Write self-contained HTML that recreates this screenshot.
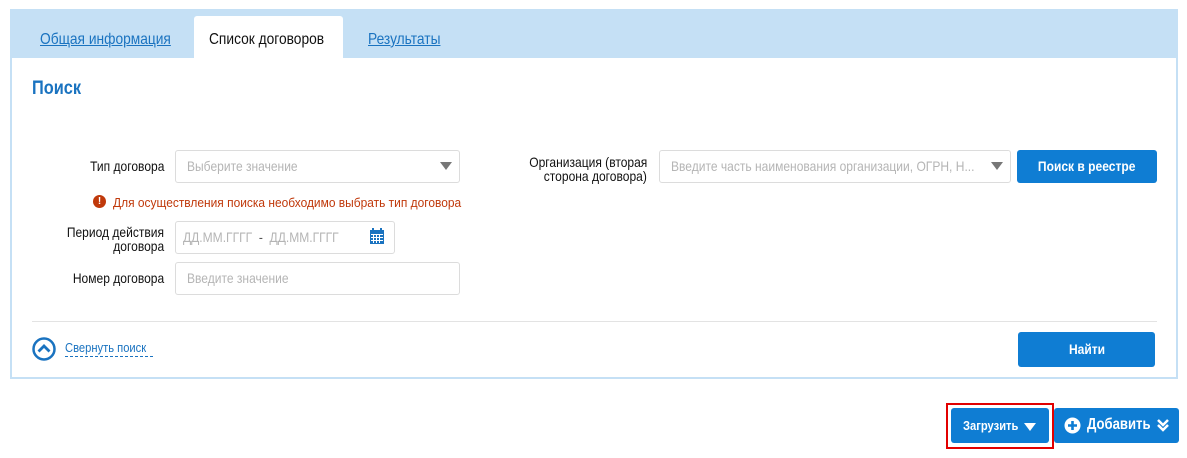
<!DOCTYPE html>
<html><head><meta charset="utf-8"><style>
*{box-sizing:border-box;margin:0;padding:0}
body{width:1187px;height:458px;background:#fff;position:relative;overflow:hidden;font-family:"Liberation Sans",sans-serif;font-size:14px;color:#111}
.a{position:absolute;white-space:nowrap}
.n{display:inline-block;transform:scaleX(.86);transform-origin:left center}
.r{display:inline-block;transform:scaleX(.86);transform-origin:right center}
.c{display:inline-block;transform:scaleX(.86);transform-origin:center center}
.panel{left:10px;top:9px;width:1168px;height:370px;background:#c5e0f5}
.inner{left:12px;top:58px;width:1164px;height:319px;background:#fff}
.tab{font-size:16px;top:31px}
.lnk{color:#1a73c0;text-decoration:underline}
.lbl{text-align:right;font-size:14px;line-height:14px}
.inp{border:1px solid #dcdcdc;border-radius:3px;background:#fff;font-size:13px;color:#b5b5b5;padding-left:11px;line-height:30px;overflow:hidden}
.btn{background:#0f7dd3;border-radius:3px;color:#fff;font-weight:bold;text-align:center;font-size:14px}
.tri{width:0;height:0;border-left:6px solid transparent;border-right:6px solid transparent;border-top:8px solid #777}
</style></head><body>
<div class="a panel"></div>
<div class="a inner"></div>
<div class="a" style="left:194px;top:16px;width:149px;height:44px;background:#fff;border-radius:3px 3px 0 0"></div>
<div class="a tab" style="left:40px"><span class="n lnk">Общая информация</span></div>
<div class="a tab" style="left:209px"><span class="n">Список договоров</span></div>
<div class="a tab" style="left:368px"><span class="n lnk">Результаты</span></div>
<div class="a" style="left:32px;top:78px;font-size:19px;font-weight:bold;color:#1a73c0"><span class="n">Поиск</span></div>

<div class="a lbl" style="left:40px;top:159px;width:124px"><span class="r">Тип договора</span></div>
<div class="a inp" style="left:175px;top:150px;width:285px;height:33px;font-size:14px"><span class="n">Выберите значение</span></div>
<div class="a tri" style="left:440px;top:162px"></div>

<div class="a" style="left:93px;top:195px;width:13px;height:13px;border-radius:50%;background:#c0390b;color:#fff;font-size:10px;font-weight:bold;text-align:center;line-height:13px">!</div>
<div class="a" style="left:113px;top:195px;font-size:13px;color:#c0390b"><span class="n" style="transform:scaleX(.92)">Для осуществления поиска необходимо выбрать тип договора</span></div>

<div class="a lbl" style="left:30px;top:225px;width:134px"><span class="r">Период действия</span><br><span class="r">договора</span></div>
<div class="a inp" style="left:175px;top:221px;width:220px;height:33px;padding-left:7px;font-size:14px"><span class="n">ДД.ММ.ГГГГ &nbsp;<span style="color:#555">-</span>&nbsp; ДД.ММ.ГГГГ</span></div>
<svg class="a" style="left:369px;top:228px" width="16" height="17" viewBox="0 0 16 17"><rect x="1" y="2" width="14" height="14" fill="#1a73c0"/><rect x="3" y="0" width="2" height="4" fill="#1a73c0"/><rect x="11" y="0" width="2" height="4" fill="#1a73c0"/><g fill="#fff"><rect x="2" y="6" width="12" height="1"/><rect x="2" y="9" width="12" height="1"/><rect x="2" y="12" width="12" height="1"/><rect x="4" y="6" width="1" height="9"/><rect x="7" y="6" width="1" height="9"/><rect x="10" y="6" width="1" height="9"/></g></svg>

<div class="a lbl" style="left:40px;top:271px;width:124px"><span class="r">Номер договора</span></div>
<div class="a inp" style="left:175px;top:262px;width:285px;height:33px;font-size:14px"><span class="n">Введите значение</span></div>

<div class="a lbl" style="left:480px;top:155px;width:167px"><span class="r">Организация (вторая</span><br><span class="r">сторона договора)</span></div>
<div class="a inp" style="left:659px;top:150px;width:352px;height:33px;font-size:14px"><span class="n">Введите часть наименования организации, ОГРН, Н...</span></div>
<div class="a" style="left:980px;top:151px;width:29px;height:30px;background:#fff"></div>
<div class="a tri" style="left:991px;top:162px"></div>
<div class="a btn" style="left:1017px;top:150px;width:140px;height:33px;line-height:33px"><span class="c">Поиск в реестре</span></div>

<div class="a" style="left:32px;top:321px;width:1125px;height:1px;background:#e3e3e3"></div>
<svg class="a" style="left:32px;top:337px" width="24" height="24" viewBox="0 0 24 24"><circle cx="12" cy="12" r="10.5" fill="none" stroke="#1a73c0" stroke-width="2.5"/><path d="M6.5 14.5 L12 9 L17.5 14.5" fill="none" stroke="#1a73c0" stroke-width="2.8"/></svg>
<div class="a" style="left:65px;top:340px;font-size:13px;color:#1a73c0;border-bottom:1px dashed #1a73c0;line-height:16px;width:88px"><span class="n">Свернуть поиск</span></div>
<div class="a btn" style="left:1018px;top:332px;width:137px;height:35px;line-height:35px"><span class="c">Найти</span></div>

<div class="a" style="left:946px;top:403px;width:108px;height:46px;border:2px solid #e20000"></div>
<div class="a btn" style="left:951px;top:408px;width:98px;height:35px"></div>
<div class="a" style="left:963px;top:418px;font-size:13px;font-weight:bold;color:#fff"><span class="n">Загрузить</span></div>
<div class="a" style="left:1024px;top:423px;width:0;height:0;border-left:6px solid transparent;border-right:6px solid transparent;border-top:8px solid #fff"></div>
<div class="a btn" style="left:1054px;top:408px;width:125px;height:35px"></div>
<svg class="a" style="left:1064px;top:417px" width="17" height="17" viewBox="0 0 17 17"><circle cx="8.5" cy="8.5" r="8" fill="#fff"/><path d="M8.5 4v9M4 8.5h9" stroke="#0f7dd3" stroke-width="2.6"/></svg>
<div class="a" style="left:1087px;top:416px;font-size:16px;font-weight:bold;color:#fff"><span class="n" style="transform:scaleX(.82)">Добавить</span></div>
<svg class="a" style="left:1156px;top:417px" width="14" height="16" viewBox="0 0 14 16"><path d="M2 3 L7 8 L12 3 M2 8 L7 13 L12 8" fill="none" stroke="#fff" stroke-width="2.5"/></svg>
</body></html>
